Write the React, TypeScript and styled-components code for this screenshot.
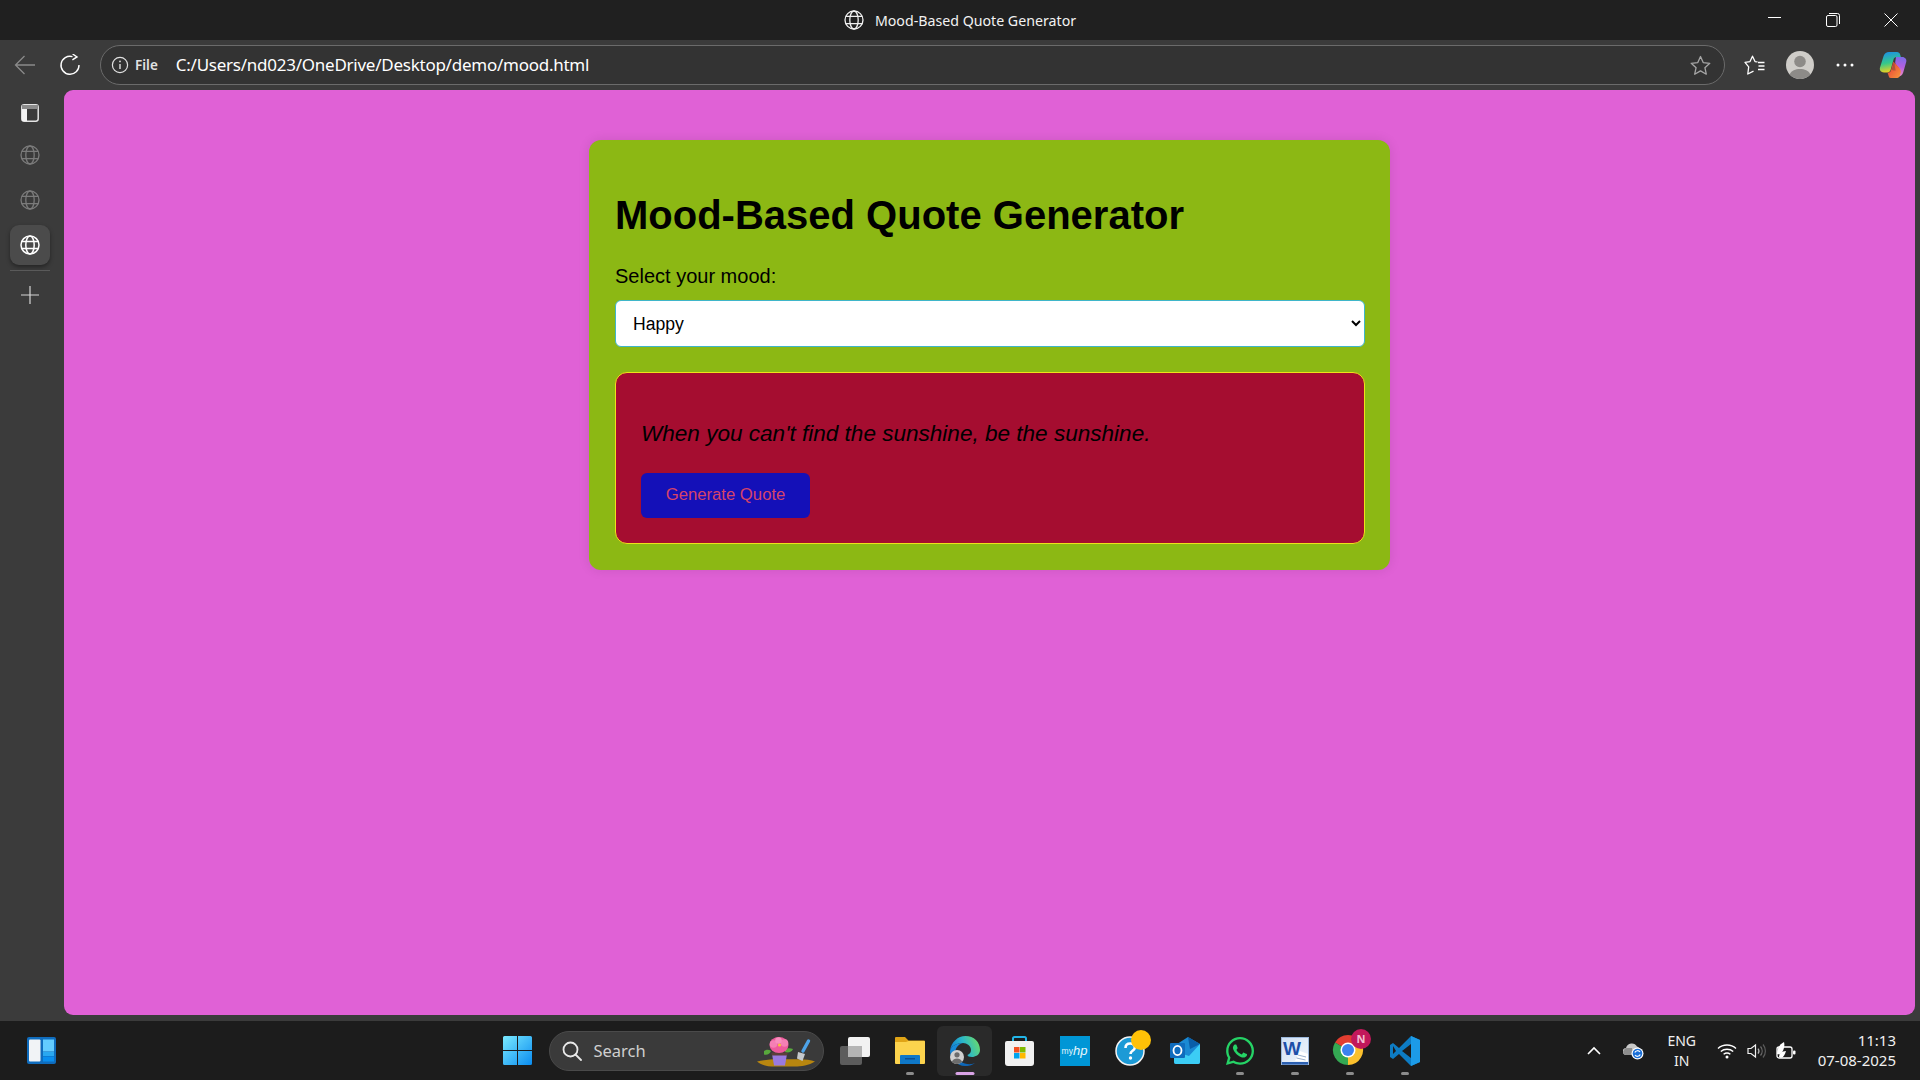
import * as React from "react"
import styled, { createGlobalStyle } from "styled-components";
import { FaWhatsapp } from "react-icons/fa";

const GlobalStyle = createGlobalStyle`
  html, body {
    margin: 0;
    padding: 0;
    background: #1c1c1c;
  }
  * {
    box-sizing: border-box;
  }
`

const Shell = styled.div`
  width: 1920px;
  height: 1080px;
  display: flex;
  flex-direction: column;
  overflow: hidden;
  font-family: "Noto Sans", "Open Sans", sans-serif;
`

const TitleBar = styled.div`
  height: 40px;
  background: #202020;
  display: grid;
  grid-template-columns: 1fr auto 1fr;
  align-items: center;
`

const TitleText = styled.div`
  display: flex;
  align-items: center;
  gap: 11px;
  color: #f2f2f2;
  font-size: 14.2px;
`

const WindowButtons = styled.div`
  display: flex;
  justify-content: flex-end;
`

const WindowButton = styled.div`
  width: 58px;
  height: 40px;
  display: flex;
  align-items: center;
  justify-content: center;
`

const Toolbar = styled.div`
  height: 50px;
  background: #3b3b3b;
  display: flex;
  align-items: center;
  padding: 0 5px 0 2px;
`

const ToolButton = styled.div<{ $shift?: number }>`
  width: 45px;
  height: 40px;
  flex: none;
  margin-left: ${(p) => p.$shift ?? 0}px;
  display: flex;
  align-items: center;
  justify-content: center;
`

const AddressBar = styled.div`
  flex: 1;
  height: 40px;
  margin: 0 7px 0 8px;
  padding: 0 13px 0 10px;
  border: 1px solid #6b6b6b;
  border-radius: 20px;
  background: #333333;
  display: flex;
  align-items: center;
`

const FileLabel = styled.span`
  margin-left: 6px;
  color: #e2e2e2;
  font-size: 13.5px;
  font-weight: 600;
`

const UrlText = styled.span`
  margin: -2px 0 0 18px;
  color: #ffffff;
  font-size: 17px;
  letter-spacing: -0.25px;
`

const StarSlot = styled.div`
  margin-left: auto;
  display: flex;
`

const BrowserBody = styled.div`
  flex: 1;
  min-height: 0;
  display: flex;
  background: #3b3b3b;
`

const Sidebar = styled.div`
  width: 64px;
  flex: none;
  padding: 3px 5px 0 0;
  display: flex;
  flex-direction: column;
  align-items: center;
`

const SideButton = styled.div<{ $active?: boolean }>`
  width: 40px;
  height: 40px;
  border-radius: 9px;
  display: flex;
  align-items: center;
  justify-content: center;
  margin-top: 5px;
  background: ${(p) => (p.$active ? "#4b4b4b" : "transparent")};
  box-shadow: ${(p) => (p.$active ? "0 2px 4px rgba(0,0,0,0.4)" : "none")};
  &:first-child {
    margin-top: 0;
    margin-bottom: -3px;
  }
  &:last-child {
    margin-top: 4px;
  }
`

const SideDivider = styled.div`
  width: 40px;
  height: 1px;
  margin-top: 5px;
  background: #5a5a5a;
`

const Page = styled.div`
  flex: 1;
  margin: 0 5px 6px 0;
  padding-top: 50px;
  border-radius: 9px;
  background: #e061d6;
  display: flex;
  flex-direction: column;
  align-items: center;
  font-family: "Liberation Sans", Arial, sans-serif;
`

const Card = styled.div`
  width: 801px;
  height: 430px;
  padding: 0 25px 0 26px;
  border-radius: 12px;
  background: #8cb814;
  box-shadow: 0 0 12px rgba(0, 0, 0, 0.1);
`

const Heading = styled.h1`
  margin: 52px 0 0;
  font-size: 40px;
  line-height: 46px;
  font-weight: 700;
  color: #000000;
`

const MoodLabel = styled.label`
  display: block;
  margin-top: 27px;
  font-size: 20px;
  line-height: 23px;
  color: #000000;
`

const MoodSelect = styled.select`
  display: block;
  width: 100%;
  height: 47px;
  margin-top: 12px;
  padding: 0 13px;
  border: 1px solid #3fb6c9;
  border-radius: 6px;
  background: #ffffff;
  color: #000000;
  font-family: "Liberation Sans", Arial, sans-serif;
  font-size: 17.6px;
`

const QuoteBox = styled.div`
  height: 172px;
  margin-top: 25px;
  padding: 0 25px;
  border: 1px solid #efe21a;
  border-radius: 12px;
  background: #a50d30;
`

const QuoteText = styled.p`
  margin: 47px 0 0;
  font-size: 22.56px;
  line-height: 28px;
  font-style: italic;
  color: #000000;
`

const GenerateButton = styled.button`
  display: block;
  width: 169px;
  height: 45px;
  margin-top: 25px;
  padding: 0 0 2px;
  border: none;
  border-radius: 6px;
  background: #1410b8;
  color: #d6436a;
  font-family: "Liberation Sans", Arial, sans-serif;
  font-size: 16.7px;
`

const Taskbar = styled.div`
  height: 59px;
  background: #1c1c1c;
  display: flex;
  align-items: center;
  color: #f0f0f0;
`

const WidgetSlot = styled.div`
  width: 490px;
  flex: none;
  padding-left: 27px;
  display: flex;
  align-items: center;
`

const TaskSlot = styled.div<{ $running?: boolean; $active?: boolean }>`
  position: relative;
  width: 55px;
  height: 50px;
  flex: none;
  display: flex;
  align-items: center;
  justify-content: center;
  border-radius: 6px;
  background: ${(p) => (p.$active ? "#2a2a2a" : "transparent")};
  &::after {
    content: "";
    display: ${(p) => (p.$running ? "block" : "none")};
    position: absolute;
    bottom: 1px;
    left: 50%;
    transform: translateX(-50%);
    width: ${(p) => (p.$active ? "19px" : "8px")};
    height: 3px;
    border-radius: 2px;
    background: ${(p) => (p.$active ? "#d9a3e6" : "#8c8c8c")};
  }
`

const SearchPill = styled.div`
  width: 275px;
  height: 40px;
  flex: none;
  margin: 0 3.5px;
  padding: 0 8px 0 12px;
  border: 1px solid #4a4a4a;
  border-radius: 20px;
  background: #3a3a3a;
  display: flex;
  align-items: center;
  overflow: hidden;
`

const SearchText = styled.span`
  margin-left: 12px;
  color: #cfcfcf;
  font-size: 16.5px;
`

const ArtSlot = styled.div`
  margin: 0 0 2px auto;
  display: flex;
  align-self: flex-end;
`

const Tray = styled.div`
  margin-left: auto;
  padding-right: 24px;
  display: flex;
  align-items: center;
`

const TrayIcon = styled.div<{ $w: number }>`
  width: ${(p) => p.$w}px;
  flex: none;
  display: flex;
  justify-content: center;
`

const LangBlock = styled.div`
  width: 56px;
  flex: none;
  text-align: center;
  font-size: 14px;
  line-height: 19.5px;
`

const ClockBlock = styled.div`
  margin-left: 16px;
  text-align: right;
  font-size: 15px;
  line-height: 19.5px;
`

const HpTile = styled.div`
  width: 30px;
  height: 30px;
  background: #0096d6;
  color: #e8f6fc;
  display: flex;
  align-items: center;
  justify-content: center;
  font-family: "Liberation Sans", Arial, sans-serif;
  font-size: 8.5px;
  & b {
    font-size: 13px;
    font-style: italic;
    font-weight: 400;
  }
`

const Globe = ({ size = 20, color = "#ffffff", width = 1.3 }: { size?: number; color?: string; width?: number }) => (
    <svg width={size} height={size} viewBox="0 0 20 20" fill="none" stroke={color} strokeWidth={width}>
        <circle cx="10" cy="10" r="9" />
        <ellipse cx="10" cy="10" rx="4.2" ry="9" />
        <path d="M1.8 6.4h16.4M1.8 13.6h16.4" />
    </svg>
)

const BackIcon = () => (
    <svg width="22" height="22" viewBox="0 0 22 22" fill="none" stroke="#8a8a8a" strokeWidth="1.3">
        <path d="M21 11H1.5M10.5 2 1.5 11l9 9" />
    </svg>
)

const ReloadIcon = () => (
    <svg width="22" height="22" viewBox="0 0 22 22" fill="none" stroke="#ffffff" strokeWidth="1.4">
        <path d="M13.5 2.6A9 9 0 1 0 20 11" />
        <path d="M14.6 0 19 2.9l-4.6 2.9" transform="translate(-1 0)" />
    </svg>
)

const InfoIcon = () => (
    <svg width="18" height="20" viewBox="0 0 18 20" fill="none" stroke="#e0e0e0" strokeWidth="1.2">
        <circle cx="9" cy="10" r="7.6" />
        <path d="M9 9v5" strokeWidth="1.4" />
        <circle cx="9" cy="6.4" r="0.9" fill="#e0e0e0" stroke="none" />
    </svg>
)

const StarIcon = () => (
    <svg width="21" height="21" viewBox="0 0 21 21" fill="none" stroke="#a6a6a6" strokeWidth="1.3" strokeLinejoin="round">
        <path d="M10.5 1.5 13.2 7.6l6.6.7-4.9 4.4 1.4 6.5-5.8-3.3-5.8 3.3 1.4-6.5L1.2 8.3l6.6-.7z" />
    </svg>
)

const FavoritesIcon = () => (
    <svg width="21" height="21" viewBox="0 0 21 21" fill="none" stroke="#ffffff" strokeWidth="1.3" strokeLinejoin="round">
        <path d="M13.5 6.8 11 6.6 8.5 1.2 6 6.6l-5 .8 3.7 4.4L3.8 19l5.7-2.8" />
        <path d="M14 7.5h6.5M14.5 11h6M14 14.5h6.5" />
    </svg>
)

const AvatarIcon = () => (
    <svg width="28" height="28" viewBox="0 0 28 28">
        <circle cx="14" cy="14" r="14" fill="#cfcdc9" />
        <circle cx="14" cy="10.5" r="5.8" fill="#8d8b88" />
        <path d="M3.6 23.4C5.6 19.4 9.4 18 14 18s8.4 1.4 10.4 5.4A14 14 0 0 1 3.6 23.4z" fill="#8d8b88" />
    </svg>
)

const DotsIcon = () => (
    <svg width="18" height="4" viewBox="0 0 18 4" fill="#ffffff">
        <circle cx="2" cy="2" r="1.5" />
        <circle cx="9" cy="2" r="1.5" />
        <circle cx="16" cy="2" r="1.5" />
    </svg>
)

const CopilotIcon = () => (
    <svg width="28" height="26" viewBox="0 0 28 26">
        <defs>
            <linearGradient id="copA" x1="0.2" y1="0" x2="0.4" y2="1">
                <stop offset="0" stopColor="#1c8fe8" />
                <stop offset="0.55" stopColor="#35c98a" />
                <stop offset="1" stopColor="#f2d21c" />
            </linearGradient>
            <linearGradient id="copB" x1="0.6" y1="0" x2="0.5" y2="1">
                <stop offset="0" stopColor="#7c6ce8" />
                <stop offset="0.5" stopColor="#b45fe0" />
                <stop offset="1" stopColor="#f08cc0" />
            </linearGradient>
            <linearGradient id="copC" x1="0" y1="0" x2="1" y2="1">
                <stop offset="0" stopColor="#e8303a" />
                <stop offset="1" stopColor="#f59a3a" />
            </linearGradient>
        </defs>
        <path d="M10 0h8c1.6 0 2.6 1 3 2.2l.9 2.8h-4.4C16 5 15 6 14.6 7.2L11.6 18c-.5 1.6-1.7 2.4-3.2 2.4H5C2 20.4.2 18.2 1 15.6L4.6 4C5.5 1.4 7.6 0 10 0z" fill="url(#copA)" />
        <path d="M17 5h6.2C26 5 28 7.4 27.2 10l-3 10.5c-.8 2.5-2.8 4-5 4.3l1-4.2c.6-2.6 0-4-1.6-6.2L17 12.6c-.8-1-1-2.4-.6-3.6z" fill="url(#copB)" />
        <path d="M14.4 9.5 12 18.5c-.5 1.6-1.8 2.2-3.4 2.2L10.2 25.6c.4.3 1 .4 1.6.4h6.4c1.4 0 2.2-.9 2.4-1.9l1-3.4c.4-2-.2-3.4-1.4-5z" fill="url(#copC)" />
        <path d="M15.6 7.4 13 16.6c-.3 1.1.3 1.8 1.3 1.8h2.4l-1-4.6z" fill="#3b3b3b" opacity="0.35" />
    </svg>
)

const PanelIcon = () => (
    <svg width="18" height="18" viewBox="0 0 18 18" fill="none">
        <rect x="0.8" y="0.8" width="16.4" height="16.4" rx="2.4" stroke="#e4e4e4" strokeWidth="1.5" />
        <rect x="1" y="1" width="16" height="4" fill="#8c8c8c" />
        <rect x="1" y="5" width="5" height="12" fill="#f4f4f4" />
    </svg>
)

const PlusIcon = () => (
    <svg width="18" height="18" viewBox="0 0 18 18" stroke="#d6d6d6" strokeWidth="1.2">
        <path d="M9 0v18M0 9h18" />
    </svg>
)

const MinimizeIcon = () => (
    <svg width="14" height="14" viewBox="0 0 14 14" stroke="#ffffff" strokeWidth="1">
        <path d="M0 4.5h13" />
    </svg>
)

const RestoreIcon = () => (
    <svg width="14" height="14" viewBox="0 0 14 14" fill="none" stroke="#ffffff" strokeWidth="1">
        <rect x="0.5" y="2.5" width="10.5" height="11" rx="1.5" />
        <path d="M3 .5h8.5a2 2 0 0 1 2 2V11" />
    </svg>
)

const CloseIcon = () => (
    <svg width="14" height="14" viewBox="0 0 14 14" stroke="#ffffff" strokeWidth="1">
        <path d="M.5.5l13 13M13.5.5l-13 13" />
    </svg>
)

const WidgetsIcon = () => (
    <svg width="29" height="27" viewBox="0 0 29 27">
        <rect width="29" height="27" rx="2" fill="#0f6cbd" />
        <rect x="2" y="2.5" width="11.5" height="22" rx="1" fill="#f1f3f6" />
        <rect x="16" y="2.5" width="11" height="12" fill="#63ccff" />
        <rect x="16" y="15" width="11" height="4" fill="#2aa8f0" />
        <rect x="16" y="19.5" width="11" height="5" fill="#0a8eee" />
    </svg>
)

const StartIcon = () => (
    <svg width="29" height="29" viewBox="0 0 29 29">
        <defs>
            <linearGradient id="startG" x1="0" y1="0" x2="1" y2="1">
                <stop offset="0" stopColor="#7aeaff" />
                <stop offset="1" stopColor="#0a8cf0" />
            </linearGradient>
        </defs>
        <path d="M1.5 0H14v14H0V1.5A1.5 1.5 0 0 1 1.5 0zM15 0h12.5A1.5 1.5 0 0 1 29 1.5V14H15zM0 15h14v14H1.5A1.5 1.5 0 0 1 0 27.5zM15 15h14v12.5a1.5 1.5 0 0 1-1.5 1.5H15z" fill="url(#startG)" />
    </svg>
)

const SearchIcon = () => (
    <svg width="20" height="20" viewBox="0 0 20 20" fill="none" stroke="#e8e8e8" strokeWidth="1.8">
        <circle cx="8.5" cy="8.5" r="7" />
        <path d="M13.5 13.5 19 19" strokeLinecap="round" />
    </svg>
)

const GardenArt = () => (
    <svg width="58" height="31" viewBox="0 0 58 31">
        <path d="M0 24.5C8 23 14 22.2 20 22.2h22c6 0 12 .8 16 2.3-6 4-14 5-20 5H18C11 29.5 5 28.500 0 24.5z" fill="#b8860f" />
        <path d="M7 14c3-2 5-1.500 7 0-1 3-4 4.500-7 3.500z" fill="#58a83c" />
        <path d="M28 13c2-2 5-2 8-1-1 3-5 4.500-8 3z" fill="#58a83c" />
        <path d="M15 17h15l-2 11.500H17z" fill="#9a7ae0" />
        <rect x="14.5" y="15.5" width="16" height="3" rx="1" fill="#5c3f3a" />
        <ellipse cx="22" cy="8" rx="9.5" ry="8" fill="#ee5a9c" />
        <circle cx="16.5" cy="7" r="3.800" fill="#f57fb4" />
        <circle cx="27.5" cy="6" r="3.800" fill="#f57fb4" />
        <circle cx="21.5" cy="3.500" r="3.300" fill="#f88fbe" />
        <circle cx="22.5" cy="8" r="1.600" fill="#f5c63c" />
        <path d="M51.5 4 46 14" stroke="#4da3e8" strokeWidth="3.400" strokeLinecap="round" />
        <path d="M41 15l7 2-2.500 7-5.500-2.500z" fill="#c4c8cc" />
    </svg>
)

const TaskViewIcon = () => (
    <svg width="30" height="28" viewBox="0 0 30 28">
        <rect x="0" y="9" width="22" height="19" rx="2" fill="#5c5c5c" />
        <rect x="8" y="0" width="22" height="20" rx="2" fill="#f2f2f2" />
        <rect x="8" y="9" width="14" height="11" fill="#b4b4b4" />
    </svg>
)

const FolderIcon = () => (
    <svg width="30" height="27" viewBox="0 0 30 27">
        <path d="M1 0h9l3.5 3.5H29a1 1 0 0 1 1 1V8H0V1a1 1 0 0 1 1-1z" fill="#e0a416" />
        <path d="M0 5h11l2.5-1H29a1 1 0 0 1 1 1v21a1 1 0 0 1-1 1H1a1 1 0 0 1-1-1z" fill="#fcd34d" />
        <path d="M5 19a1 1 0 0 1 1-1h18a1 1 0 0 1 1 1v8H5z" fill="#0f78c8" />
        <rect x="10" y="21" width="10" height="1.5" fill="#0a4f94" />
    </svg>
)

const EdgeIcon = () => (
    <svg width="30" height="30" viewBox="0 0 30 30">
        <defs>
            <linearGradient id="edgeTop" x1="0" y1="0.6" x2="1" y2="0.3">
                <stop offset="0" stopColor="#0f78d4" />
                <stop offset="0.5" stopColor="#2bb8c8" />
                <stop offset="1" stopColor="#6bdc6a" />
            </linearGradient>
            <linearGradient id="edgeLow" x1="0.2" y1="0" x2="0.8" y2="1">
                <stop offset="0" stopColor="#1790e0" />
                <stop offset="1" stopColor="#0c5fb0" />
            </linearGradient>
        </defs>
        <path d="M0 15C1 6 8 0 15.5 0 24 0 30 6 30 14c0 5-5 7-8 7-3 0-4.5-1-4.5-2 2.500-1 3.500-3 3.500-5 0-4-4-7-8-7C7 7 1 10 0 15z" fill="url(#edgeTop)" />
        <path d="M13 7C8 8 4 13 6 19c2 6 8 10 16 9l3-1c-3 2.500-6.500 3-10 3C7 30 0 23 0 15 1 10 7 7 13 7z" fill="url(#edgeLow)" />
        <circle cx="7" cy="21" r="7" fill="#d0d0d0" />
        <circle cx="7" cy="18.800" r="2.600" fill="#6c6c6c" />
        <path d="M1.800 25.800C3 23 4.800 22.400 7 22.400s4 .6 5.200 3.400a7 7 0 0 1-10.400 0z" fill="#6c6c6c" />
    </svg>
)

const StoreIcon = () => (
    <svg width="29" height="30" viewBox="0 0 29 30">
        <path d="M8 7V2.500A1.500 1.500 0 0 1 9.500 1h10A1.500 1.500 0 0 1 21 2.500V7" fill="none" stroke="#22b5e8" strokeWidth="2" />
        <path d="M0 7a2 2 0 0 1 2-2h25a2 2 0 0 1 2 2v20a3 3 0 0 1-3 3H3a3 3 0 0 1-3-3z" fill="#f1f1f1" />
        <rect x="9" y="11" width="5.5" height="5.5" fill="#f25022" />
        <rect x="15" y="11" width="5.5" height="5.5" fill="#7fba00" />
        <rect x="9" y="17" width="5.5" height="5.5" fill="#00a4ef" />
        <rect x="15" y="17" width="5.5" height="5.5" fill="#ffb900" />
    </svg>
)

const HelpIcon = () => (
    <svg width="42" height="44" viewBox="0 0 42 44">
        <circle cx="21" cy="22" r="14" fill="#1c9ad6" stroke="#f4f4f4" strokeWidth="1.5" />
        <path d="M16.5 19c0-3 2-4.500 4.700-4.500s4.600 1.500 4.600 3.900c0 3.500-4.300 3.300-4.300 6.500" fill="none" stroke="#ffffff" strokeWidth="2.6" />
        <circle cx="21.5" cy="29" r="1.7" fill="#ffffff" />
        <circle cx="32" cy="11" r="10" fill="#ffc107" />
    </svg>
)

const OutlookIcon = () => (
    <svg width="30" height="27" viewBox="0 0 30 27">
        <path d="M4 9 18 0l12 7v18a2 2 0 0 1-2 2H6a2 2 0 0 1-2-2z" fill="#1a8ad4" />
        <path d="M18 0l12 7-10 5z" fill="#0a5ea8" />
        <path d="M4 14l15 5 11-12v18a2 2 0 0 1-2 2H6a2 2 0 0 1-2-2z" fill="#3ccdf5" />
        <rect x="0" y="6" width="15" height="15" rx="1" fill="#0f6cbd" />
        <ellipse cx="7.5" cy="13.5" rx="4" ry="4.6" fill="none" stroke="#ffffff" strokeWidth="1.8" />
    </svg>
)

const WordIcon = () => (
    <svg width="28" height="28" viewBox="0 0 28 28">
        <defs>
            <linearGradient id="wordBg" x1="0" y1="0" x2="1" y2="1">
                <stop offset="0" stopColor="#cfe0f5" />
                <stop offset="1" stopColor="#f2f6fb" />
            </linearGradient>
        </defs>
        <rect x="0.5" y="0.5" width="27" height="27" fill="url(#wordBg)" stroke="#9cb8dc" />
        <rect x="1" y="25" width="26" height="2.5" fill="#2b5fb0" />
        <text x="2" y="18" fontFamily="Liberation Sans, Arial, sans-serif" fontSize="19" fontWeight="700" fill="#1d4fa8">W</text>
        <path d="M19 14l8 3v7H14z" fill="#ffffff" />
        <path d="M17 18l8 2M15.500 21l9 2" stroke="#9bb0cc" />
    </svg>
)

const ChromeIcon = () => (
    <svg width="42" height="44" viewBox="0 0 42 44">
        <path d="M19 21 32 13.5A15 15 0 0 0 6 13.5z" fill="#e23d30" />
        <path d="M19 21 6 13.5A15 15 0 0 0 19 36z" fill="#34a853" />
        <path d="M19 21 19 36A15 15 0 0 0 32 13.5z" fill="#fbc02d" />
        <circle cx="19" cy="21" r="7.5" fill="#ffffff" />
        <circle cx="19" cy="21" r="6" fill="#3c82f0" />
        <circle cx="32" cy="10" r="10" fill="#c2185b" />
        <text x="32" y="14" textAnchor="middle" fontFamily="Noto Sans, sans-serif" fontSize="11" fontWeight="700" fill="#f4c0d4">N</text>
    </svg>
)

const VsCodeIcon = () => (
    <svg width="30" height="30" viewBox="0 0 30 30">
        <path d="M21 0 30 4v22l-9 4L9 18 3 23 0 21v-12l3-2 6 5z" fill="#0d7cc4" />
        <path d="M21 0 30 4v22l-9 4z" fill="#1c9be8" />
        <path d="M21 8v14l-9-7z" fill="#1c1c1c" />
        <path d="M3 10l3 5-3 3z" fill="#1c1c1c" />
    </svg>
)

const ChevronUpIcon = () => (
    <svg width="14" height="9" viewBox="0 0 14 9" fill="none" stroke="#ffffff" strokeWidth="1.6">
        <path d="M1 8l6-6 6 6" />
    </svg>
)

const CloudSyncIcon = () => (
    <svg width="21" height="19" viewBox="0 0 21 19">
        <path d="M3.5 14a3.500 3.500 0 0 1-.5-7 6 6 0 0 1 11-1.500 4 4 0 0 1 3 5L10 14z" fill="#c8c8c8" />
        <path d="M1 9a3 3 0 0 1 3-2h5l2 7H3.500A3 3 0 0 1 1 9z" fill="#8d8d8d" />
        <circle cx="14.5" cy="12.5" r="6" fill="#ffffff" />
        <circle cx="14.5" cy="12.5" r="4.8" fill="#1b6fd6" />
        <path d="M11.8 11.500a3 3 0 0 1 5.200-.5M17.200 13.500a3 3 0 0 1-5.200.5" fill="none" stroke="#ffffff" strokeWidth="1.2" />
    </svg>
)

const WifiIcon = () => (
    <svg width="20" height="16" viewBox="0 0 20 16" fill="none" stroke="#ffffff" strokeWidth="1.4">
        <path d="M1 5.500c5-4.600 13-4.600 18 0M3.800 8.500c3.400-3 9-3 12.400 0M6.600 11.300c2-1.500 4.800-1.500 6.800 0" />
        <circle cx="10" cy="14" r="1.5" fill="#ffffff" stroke="none" />
    </svg>
)

const VolumeIcon = () => (
    <svg width="20" height="16" viewBox="0 0 20 16" fill="none" stroke="#f0f0f0" strokeWidth="1.2">
        <path d="M1 5.500h3L8.500 2v12L4 10.500H1z" />
        <path d="M11 5.500a4 4 0 0 1 0 5" stroke="#b8b8b8" />
        <path d="M13.500 3.500a7 7 0 0 1 0 9" stroke="#6c6c6c" />
        <path d="M16 1.500a10 10 0 0 1 0 13" stroke="#5c5c5c" />
    </svg>
)

const BatteryIcon = () => (
    <svg width="20" height="17" viewBox="0 0 20 17">
        <rect x="1" y="5" width="15" height="11" rx="2" fill="none" stroke="#ffffff" strokeWidth="1.3" />
        <rect x="17" y="8.5" width="2.5" height="4" rx="1" fill="#ffffff" />
        <path d="M1 12C1 6 4 2 8 0c1 4 0 9-4 12.500z" fill="#ffffff" />
        <path d="M3 15c0-3 3-6 7-6-1 3-2 6-5 7z" fill="#ffffff" />
    </svg>
)

const App = () => {
    const [mood, setMood] = React.useState("Happy")
    return (
        <Shell>
            <GlobalStyle />
            <TitleBar>
                <div />
                <TitleText>
                    <Globe size={20} color="#f0f0f0" />
                    Mood-Based Quote Generator
                </TitleText>
                <WindowButtons>
                    <WindowButton><MinimizeIcon /></WindowButton>
                    <WindowButton><RestoreIcon /></WindowButton>
                    <WindowButton><CloseIcon /></WindowButton>
                </WindowButtons>
            </TitleBar>
            <Toolbar>
                <ToolButton><BackIcon /></ToolButton>
                <ToolButton><ReloadIcon /></ToolButton>
                <AddressBar>
                    <InfoIcon />
                    <FileLabel>File</FileLabel>
                    <UrlText>C:/Users/nd023/OneDrive/Desktop/demo/mood.html</UrlText>
                    <StarSlot><StarIcon /></StarSlot>
                </AddressBar>
                <ToolButton><FavoritesIcon /></ToolButton>
                <ToolButton><AvatarIcon /></ToolButton>
                <ToolButton><DotsIcon /></ToolButton>
                <ToolButton $shift={3}><CopilotIcon /></ToolButton>
            </Toolbar>
            <BrowserBody>
                <Sidebar>
                    <SideButton><PanelIcon /></SideButton>
                    <SideButton><Globe size={20} color="#7b7b7b" /></SideButton>
                    <SideButton><Globe size={20} color="#7b7b7b" /></SideButton>
                    <SideButton $active><Globe size={20} width={1.5} /></SideButton>
                    <SideDivider />
                    <SideButton><PlusIcon /></SideButton>
                </Sidebar>
                <Page>
                    <Card>
                        <Heading>Mood-Based Quote Generator</Heading>
                        <MoodLabel htmlFor="mood">Select your mood:</MoodLabel>
                        <MoodSelect id="mood" value={mood} onChange={(e) => setMood(e.target.value)}>
                            <option>Happy</option>
                            <option>Sad</option>
                            <option>Motivated</option>
                        </MoodSelect>
                        <QuoteBox>
                            <QuoteText>When you can't find the sunshine, be the sunshine.</QuoteText>
                            <GenerateButton>Generate Quote</GenerateButton>
                        </QuoteBox>
                    </Card>
                </Page>
            </BrowserBody>
            <Taskbar>
                <WidgetSlot><WidgetsIcon /></WidgetSlot>
                <TaskSlot><StartIcon /></TaskSlot>
                <SearchPill>
                    <SearchIcon />
                    <SearchText>Search</SearchText>
                    <ArtSlot><GardenArt /></ArtSlot>
                </SearchPill>
                <TaskSlot><TaskViewIcon /></TaskSlot>
                <TaskSlot $running><FolderIcon /></TaskSlot>
                <TaskSlot $running $active><EdgeIcon /></TaskSlot>
                <TaskSlot><StoreIcon /></TaskSlot>
                <TaskSlot><HpTile>my<b>hp</b></HpTile></TaskSlot>
                <TaskSlot><HelpIcon /></TaskSlot>
                <TaskSlot><OutlookIcon /></TaskSlot>
                <TaskSlot $running><FaWhatsapp size={32} color="#25d366" /></TaskSlot>
                <TaskSlot $running><WordIcon /></TaskSlot>
                <TaskSlot $running><ChromeIcon /></TaskSlot>
                <TaskSlot $running><VsCodeIcon /></TaskSlot>
                <Tray>
                    <TrayIcon $w={40}><ChevronUpIcon /></TrayIcon>
                    <TrayIcon $w={40}><CloudSyncIcon /></TrayIcon>
                    <LangBlock>ENG<br />IN</LangBlock>
                    <TrayIcon $w={34}><WifiIcon /></TrayIcon>
                    <TrayIcon $w={26}><VolumeIcon /></TrayIcon>
                    <TrayIcon $w={32}><BatteryIcon /></TrayIcon>
                    <ClockBlock>11:13<br />07-08-2025</ClockBlock>
                </Tray>
            </Taskbar>
        </Shell>
    )
}

export default App
